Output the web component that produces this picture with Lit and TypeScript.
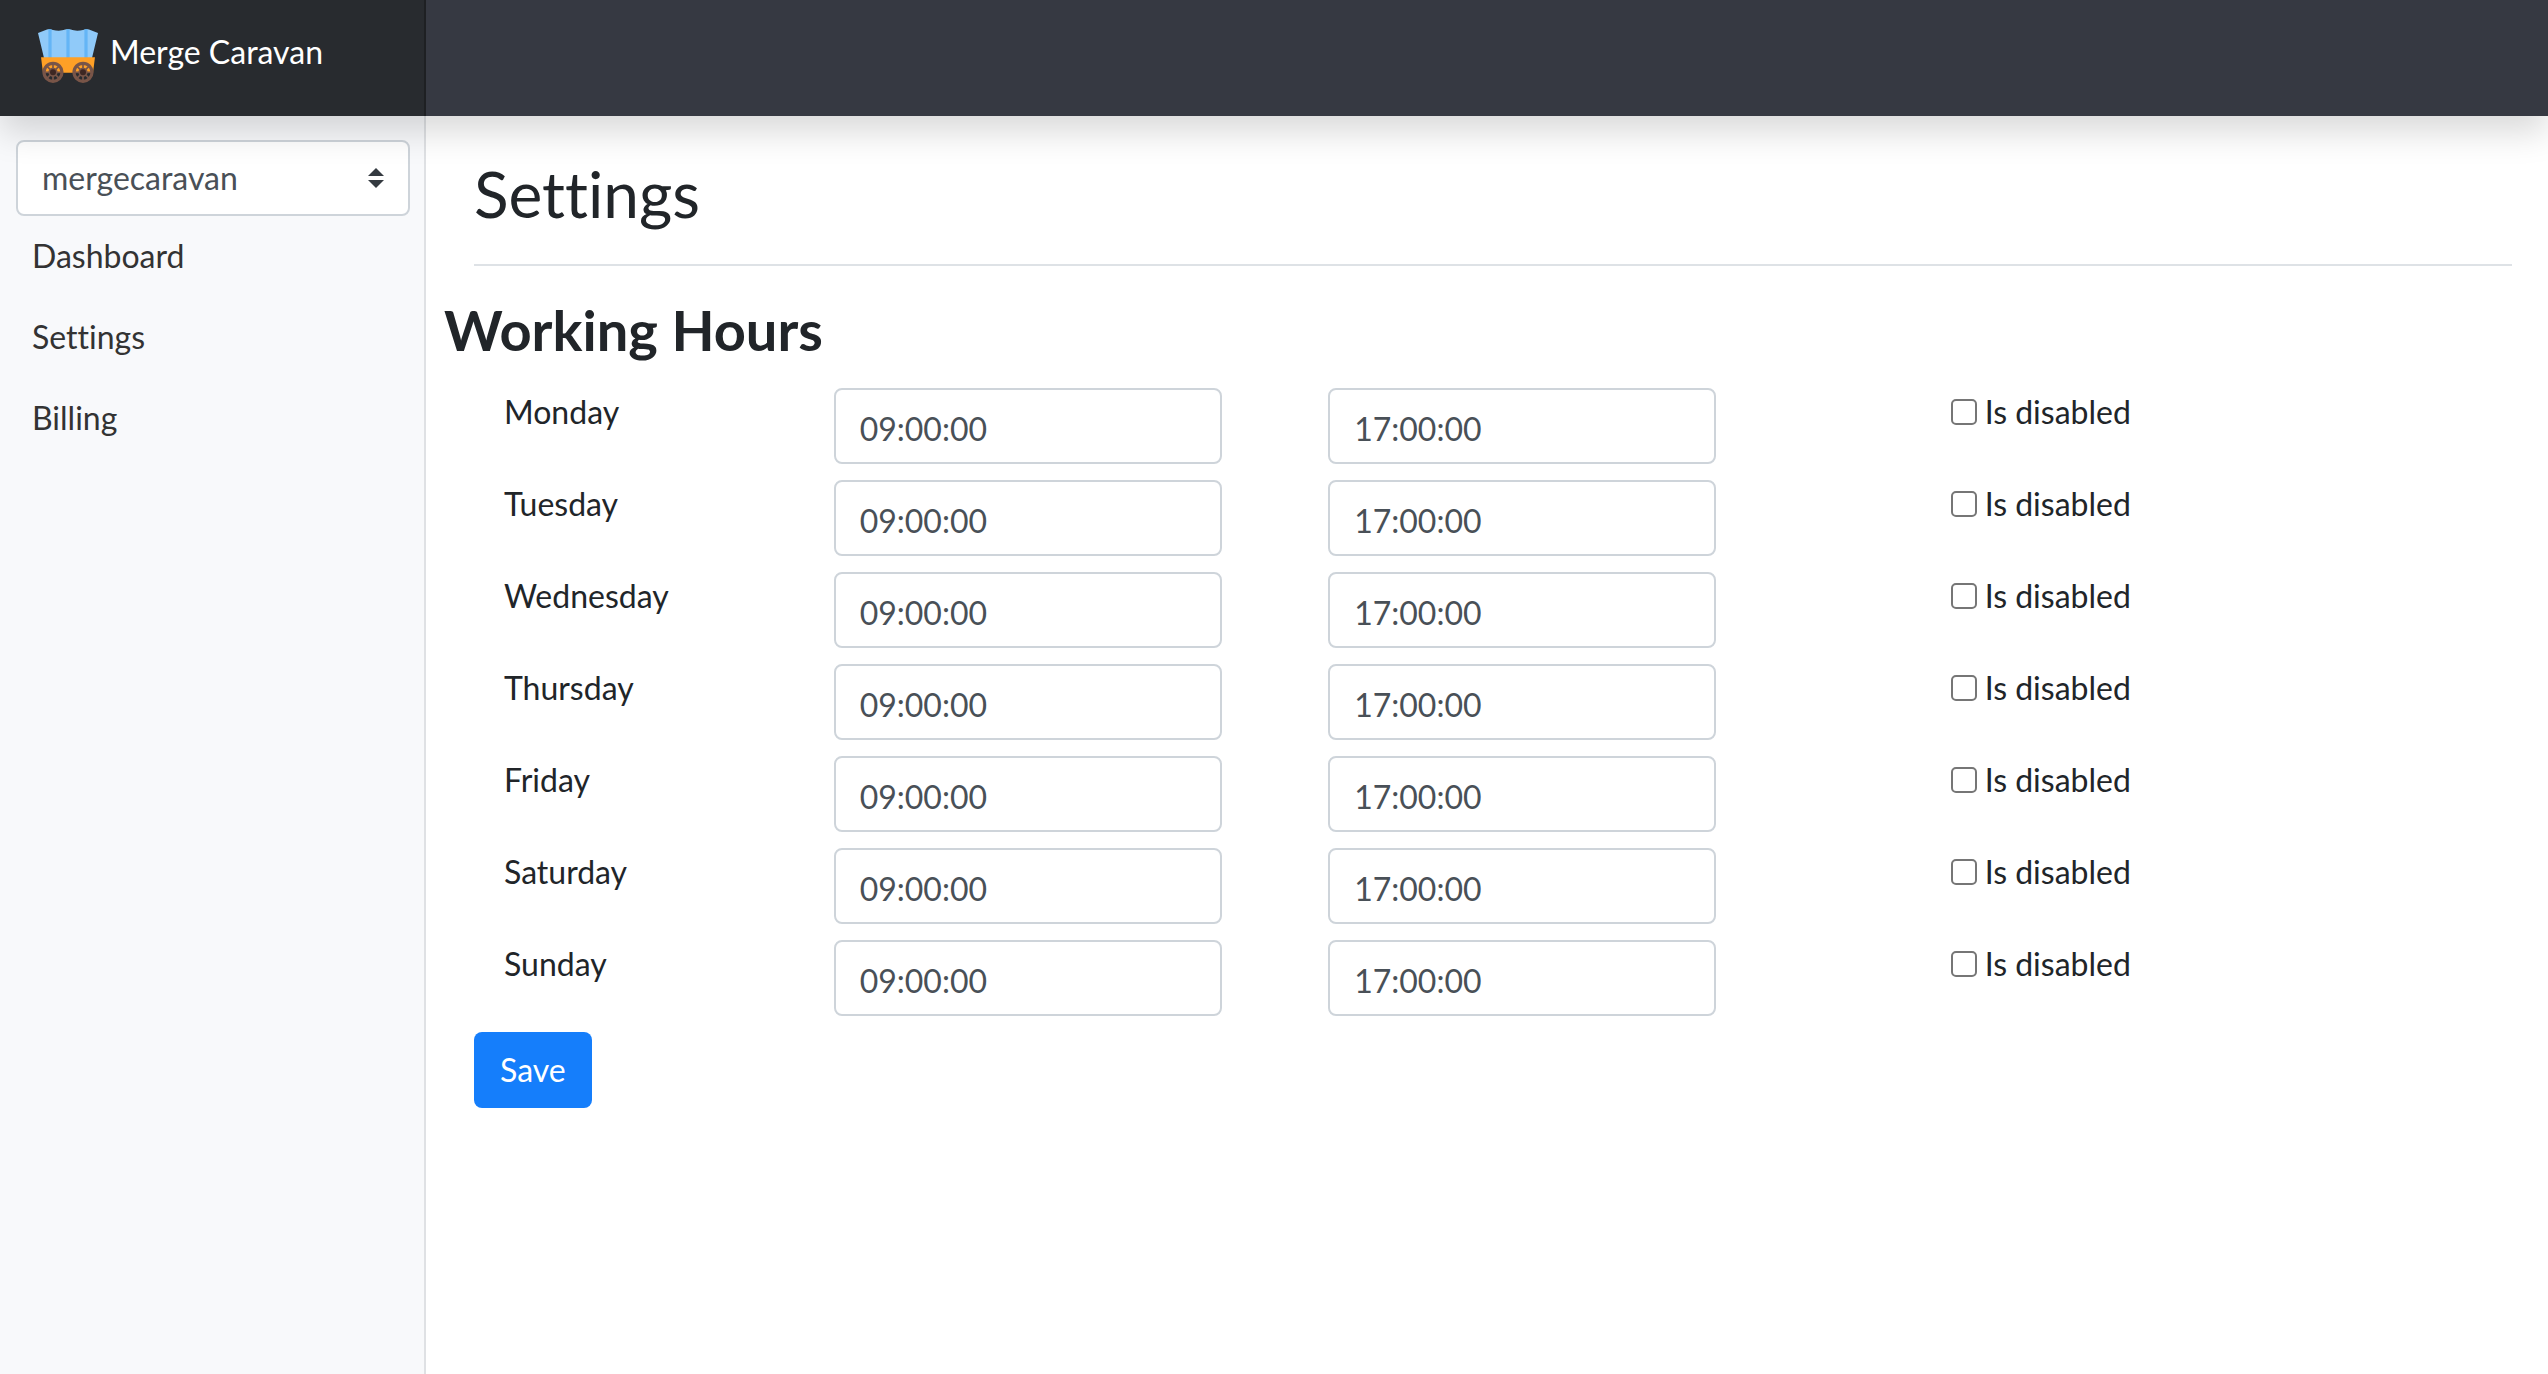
import { LitElement, html, svg, css } from "lit";
import { customElement, state } from "lit/decorators.js";

interface WorkingDay {
  name: string;
  start: string;
  end: string;
  disabled: boolean;
}

const DAY_NAMES = ["Monday", "Tuesday", "Wednesday", "Thursday", "Friday", "Saturday", "Sunday"];
const SPOKE_ANGLES = [0, 45, 90, 135];

const wheel = (cx: number, cy: number) => svg`
  <g transform="translate(${cx} ${cy})">
    <circle r="9" fill="none" stroke="#795548" stroke-width="3.2" />
    ${SPOKE_ANGLES.map(
      (angle) => svg`<path d="M-9 0H9" stroke="#795548" stroke-width="1.7" transform="rotate(${angle})" />`
    )}
    <circle r="4.6" fill="#795548" />
    <circle r="3" fill="#3e2723" />
  </g>
`;

@customElement("app-header")
export class AppHeader extends LitElement {
  static styles = css`
    :host {
      display: block;
      position: relative;
      z-index: 1;
      background: #363942;
      box-shadow: 0 16px 32px rgba(0, 0, 0, 0.15);
    }
    .brand {
      display: flex;
      align-items: center;
      gap: 12px;
      box-sizing: border-box;
      width: 426px;
      height: 116px;
      padding: 0 38px 4px;
      background: #282b2f;
      box-shadow: inset -2px 0 0 rgba(0, 0, 0, 0.25);
      color: #fff;
      line-height: 48px;
      text-decoration: none;
    }
    .logo {
      width: 60px;
      height: 54px;
    }
    .name {
      padding-bottom: 8px;
    }
  `;

  render() {
    return html`
      <a class="brand" href="#">
        <svg class="logo" viewBox="0 0 60 54" aria-hidden="true">
          <path
            fill="#90caf9"
            d="M0 4L9 0.4C11 0 13 0.2 15 0.9C19 2.1 24 1.9 27 0.6C29 0 31 0 33 0.6C36 1.9 41 2.1 45 0.9C47 0.2 49 0 51 0.4L60 4L54 29H6Z"
          />
          <path fill="#64b5f6" d="M10.4 0.2H13.6V29H10.4ZM28.4 0.3H31.6V29H28.4ZM46.4 0.2H49.6V29H46.4Z" />
          <path fill="#ffa026" d="M3 28.3H57L55 43.7H5Z" />
          ${wheel(15, 43.3)} ${wheel(45, 43.3)}
        </svg>
        <span class="name">Merge Caravan</span>
      </a>
    `;
  }
}

@customElement("app-sidebar")
export class AppSidebar extends LitElement {
  static styles = css`
    :host {
      display: block;
      box-sizing: border-box;
      padding: 24px 14px 0 16px;
      background: #f8f9fb;
      border-right: 2px solid #dfe1e4;
    }
    .picker {
      display: grid;
      align-items: center;
    }
    .select,
    .arrows {
      grid-area: 1 / 1;
    }
    .select {
      appearance: none;
      box-sizing: border-box;
      width: 100%;
      height: 76px;
      padding: 12px 56px 12px 24px;
      border: 2px solid #ced4da;
      border-radius: 8px;
      background: #fff;
      color: #495057;
      font: inherit;
      line-height: 48px;
    }
    .arrows {
      justify-self: end;
      width: 16px;
      height: 20px;
      margin-right: 26px;
      pointer-events: none;
    }
    .nav {
      display: grid;
      gap: 33px;
      padding: 16px;
    }
    .link {
      color: #333;
      line-height: 48px;
      text-decoration: none;
    }
  `;

  render() {
    return html`
      <div class="picker">
        <select class="select" aria-label="Organization">
          <option>mergecaravan</option>
        </select>
        <svg class="arrows" viewBox="0 0 4 5" aria-hidden="true">
          <path fill="#343a40" d="M2 0L0 2h4zm0 5L0 3h4z" />
        </svg>
      </div>
      <nav class="nav">
        <a class="link" href="#dashboard">Dashboard</a>
        <a class="link" href="#settings">Settings</a>
        <a class="link" href="#billing">Billing</a>
      </nav>
    `;
  }
}

@customElement("working-hours")
export class WorkingHours extends LitElement {
  static styles = css`
    :host {
      display: block;
    }
    .heading {
      margin: 0 0 24px -30px;
      font-size: 56px;
      font-weight: 700;
      line-height: 68px;
    }
    .rows {
      display: grid;
      gap: 16px;
      margin-right: 60px;
    }
    .row {
      display: grid;
      grid-template-columns: 2fr 3fr 3fr 4fr;
      align-items: start;
      line-height: 48px;
    }
    .day,
    .cell {
      padding-left: 30px;
    }
    .time {
      display: block;
      box-sizing: border-box;
      width: 388px;
      max-width: 100%;
      height: 76px;
      padding: 14px 24px 10px;
      border: 2px solid #ced4da;
      border-radius: 8px;
      background: #fff;
      color: #495057;
      font: inherit;
      line-height: 48px;
    }
    .toggle {
      display: flex;
      align-items: center;
      gap: 8px;
      padding-left: 158px;
    }
    .check {
      appearance: none;
      box-sizing: border-box;
      width: 26px;
      height: 26px;
      margin: 0;
      border: 2px solid #767676;
      border-radius: 5px;
      background: #fff;
    }
    .check:checked {
      background: #767676;
    }
    .save {
      height: 76px;
      margin-top: 16px;
      padding: 14px 26px;
      border: 0;
      border-radius: 8px;
      background: #157efb;
      color: #fff;
      font: inherit;
      line-height: 48px;
    }
  `;

  @state() private days: WorkingDay[] = DAY_NAMES.map((name) => ({
    name,
    start: "09:00:00",
    end: "17:00:00",
    disabled: false,
  }));

  private toggle(index: number, disabled: boolean) {
    this.days = this.days.map((day, i) => (i === index ? { ...day, disabled } : day));
  }

  private row(day: WorkingDay, index: number) {
    const label = `day-${index}`;
    return html`
      <div class="row">
        <span class="day" id=${label}>${day.name}</span>
        <div class="cell">
          <input class="time" type="text" aria-labelledby=${label} .value=${day.start} />
        </div>
        <div class="cell">
          <input class="time" type="text" aria-labelledby=${label} .value=${day.end} />
        </div>
        <label class="toggle">
          <input
            class="check"
            type="checkbox"
            .checked=${day.disabled}
            @change=${(e: Event) => this.toggle(index, (e.target as HTMLInputElement).checked)}
          />
          <span>Is disabled</span>
        </label>
      </div>
    `;
  }

  render() {
    return html`
      <h3 class="heading">Working Hours</h3>
      <form @submit=${(e: Event) => e.preventDefault()}>
        <div class="rows">${this.days.map((day, index) => this.row(day, index))}</div>
        <button class="save" type="submit">Save</button>
      </form>
    `;
  }
}

@customElement("app-root")
export class AppRoot extends LitElement {
  static styles = css`
    :host {
      display: flex;
      flex-direction: column;
      min-height: 100vh;
      background: #fff;
      color: #212529;
      font-family: Lato, "Liberation Sans", sans-serif;
      font-size: 32px;
      font-variant-ligatures: none;
      line-height: 48px;
    }
    .body {
      display: flex;
      flex: 1;
    }
    .sidebar {
      flex: 0 0 426px;
    }
    .main {
      flex: 1;
      min-width: 0;
      padding: 40px 36px 48px 48px;
    }
    .title {
      margin: 0 0 30px;
      padding-bottom: 32px;
      border-bottom: 2px solid #dee2e6;
      font-size: 64px;
      font-weight: 400;
      line-height: 76px;
    }
  `;

  render() {
    return html`
      <app-header></app-header>
      <div class="body">
        <app-sidebar class="sidebar"></app-sidebar>
        <main class="main">
          <h2 class="title">Settings</h2>
          <working-hours></working-hours>
        </main>
      </div>
    `;
  }
}
